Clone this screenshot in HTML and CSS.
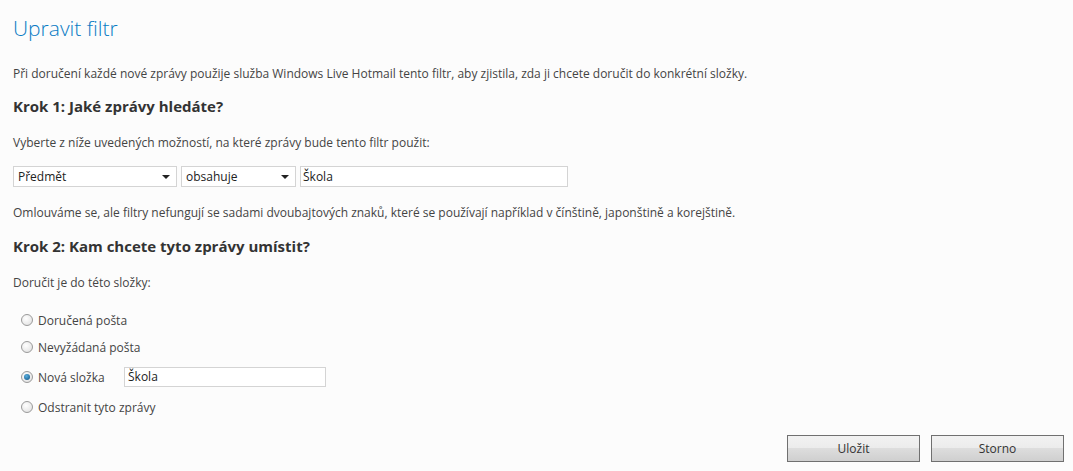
FILE: index.html
```html
<!DOCTYPE html>
<html lang="cs">
<head>
  <meta charset="UTF-8" />
  <title>Upravit filtr</title>
  <link rel="stylesheet" href="styles.css">
</head>
<body>
  <main class="page">
    <h1>Upravit filtr</h1>
    <p class="intro">Při doručení každé nové zprávy použije služba Windows Live Hotmail tento filtr, aby zjistila, zda ji chcete doručit do konkrétní složky.</p>

    <h2>Krok 1: Jaké zprávy hledáte?</h2>
    <p>Vyberte z níže uvedených možností, na které zprávy bude tento filtr použit:</p>

    <div class="rule">
      <div class="select sel-field">Předmět<span class="arrow"></span></div>
      <div class="select sel-op">obsahuje<span class="arrow"></span></div>
      <div class="textbox tb-value">Škola</div>
    </div>

    <p>Omlouváme se, ale filtry nefungují se sadami dvoubajtových znaků, které se používají například v čínštině, japonštině a korejštině.</p>

    <h2 class="step2">Krok 2: Kam chcete tyto zprávy umístit?</h2>
    <p>Doručit je do této složky:</p>

    <ul class="folders">
      <li><span class="radio"></span>Doručená pošta</li>
      <li><span class="radio"></span>Nevyžádaná pošta</li>
      <li class="new-folder"><span class="radio checked"></span><span class="label">Nová složka</span><div class="textbox tb-folder">Škola</div></li>
      <li><span class="radio"></span>Odstranit tyto zprávy</li>
    </ul>

    <div class="actions">
      <button class="btn">Uložit</button>
      <button class="btn">Storno</button>
    </div>
  </main>
</body>
</html>
```
FILE: styles.css
```css
body {
  margin: 0;
  background-color: #fcfcfc;
  font-family: 'Open Sans', 'Noto Sans', sans-serif;
  font-size: 12px;
  color: #444;
}

.page {
  padding: 13px 9px 0 13px;
}

h1 {
  margin: 0;
  font-size: 21px;
  font-weight: 300;
  color: #0a7bc4;
  line-height: 30px;
}

p {
  margin: 0;
  line-height: 16px;
}

.intro {
  margin-top: 23px;
}

h2 {
  margin: 14px 0 0;
  font-size: 15px;
  font-weight: bold;
  color: #333;
  line-height: 20px;
}

h2.step2 {
  margin-top: 15px;
}

h2 + p {
  margin-top: 19px;
}

.rule {
  display: flex;
  gap: 4px;
  margin-top: 15px;
  margin-bottom: 18px;
}

.select, .textbox {
  box-sizing: border-box;
  height: 21px;
  line-height: 19px;
  border: 1px solid #d4d4d4;
  background: #fff;
  padding: 0 4px;
  color: #222;
  position: relative;
}

.sel-field { width: 164px; }
.sel-op { width: 115px; }
.tb-value { width: 268px; padding-left: 2px; }

.arrow {
  position: absolute;
  right: 6px;
  top: 8px;
  border-left: 4px solid transparent;
  border-right: 4px solid transparent;
  border-top: 4px solid #222;
}

.folders {
  list-style: none;
  margin: 19px 0 0;
  padding: 0 0 0 8px;
}

.folders li {
  display: flex;
  align-items: center;
  height: 20px;
  margin-bottom: 7px;
}

.folders li.new-folder {
  margin-top: 10px;
  margin-bottom: 10px;
}

.radio {
  box-sizing: border-box;
  width: 12px;
  height: 12px;
  border-radius: 50%;
  border: 1px solid #9a9a9a;
  background: radial-gradient(circle at 40% 35%, #fff, #ddd);
  margin-right: 5px;
  position: relative;
}

.radio.checked::after {
  content: "";
  position: absolute;
  left: 2px;
  top: 2px;
  width: 6px;
  height: 6px;
  border-radius: 50%;
  background: radial-gradient(circle at 40% 35%, #5ab0e0, #0b4f80);
}

.new-folder .label {
  width: 86px;
}

.tb-folder {
  width: 202px;
  height: 20px;
  line-height: 18px;
  padding-left: 3px;
}

.actions {
  display: flex;
  justify-content: flex-end;
  gap: 11px;
  margin-top: 18px;
}

.btn {
  box-sizing: border-box;
  width: 133px;
  height: 27px;
  border: 1px solid #707070;
  background: linear-gradient(#f2f2f2, #ebebeb 50%, #dddddd 50%, #cfcfcf);
  font-family: 'Open Sans', 'Noto Sans', sans-serif;
  font-size: 12px;
  color: #333;
}
```
